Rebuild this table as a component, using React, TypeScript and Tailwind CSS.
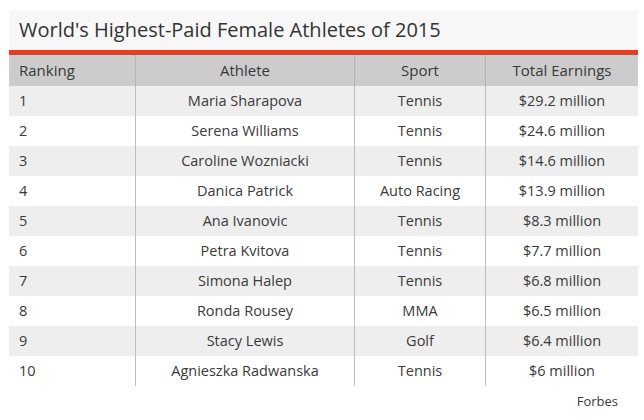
const rows = [
    ['1', 'Maria Sharapova', 'Tennis', '$29.2 million'],
    ['2', 'Serena Williams', 'Tennis', '$24.6 million'],
    ['3', 'Caroline Wozniacki', 'Tennis', '$14.6 million'],
    ['4', 'Danica Patrick', 'Auto Racing', '$13.9 million'],
    ['5', 'Ana Ivanovic', 'Tennis', '$8.3 million'],
    ['6', 'Petra Kvitova', 'Tennis', '$7.7 million'],
    ['7', 'Simona Halep', 'Tennis', '$6.8 million'],
    ['8', 'Ronda Rousey', 'MMA', '$6.5 million'],
    ['9', 'Stacy Lewis', 'Golf', '$6.4 million'],
    ['10', 'Agnieszka Radwanska', 'Tennis', '$6 million'],
];

const cols = 'grid grid-cols-[126px_219px_131px_153px]';

export default function App() {
    return (
        <div className="w-[644px] h-[420px] bg-white pt-[10px] pl-[9px] font-['Open_Sans',sans-serif] text-[#3a3a3a]">
            <div className="w-[629px]">
                <div className="h-[40px] bg-[#f7f7f7] pl-[10px] flex items-center text-[20px] text-[#333] leading-none">
                    World's Highest-Paid Female Athletes of 2015
                </div>
                <div className="h-[5px] bg-[#e63d24]" />
                <div className={`${cols} h-[31px] bg-[#cccccc] text-[15px] text-[#383838]`}>
                    <div className="pl-[10px] flex items-center">Ranking</div>
                    <div className="flex items-center justify-center border-l border-[#b3b3b3]">Athlete</div>
                    <div className="flex items-center justify-center border-l border-[#b3b3b3]">Sport</div>
                    <div className="flex items-center justify-center border-l border-[#b3b3b3]">Total Earnings</div>
                </div>
                {rows.map((r, i) => (
                    <div key={r[0]} className={`${cols} h-[30px] text-[14.5px] ${i % 2 === 0 ? 'bg-[#eeeeee]' : 'bg-white'}`}>
                        <div className="pl-[10px] flex items-center">{r[0]}</div>
                        <div className="flex items-center justify-center border-l border-[#bdbdbd]">{r[1]}</div>
                        <div className="flex items-center justify-center border-l border-[#bdbdbd]">{r[2]}</div>
                        <div className="flex items-center justify-center border-l border-[#bdbdbd]">{r[3]}</div>
                    </div>
                ))}
                <div className="flex justify-end pr-[20px] pt-[6px] text-[13px] text-[#3a3a3a]">Forbes</div>
            </div>
        </div>
    );
}
